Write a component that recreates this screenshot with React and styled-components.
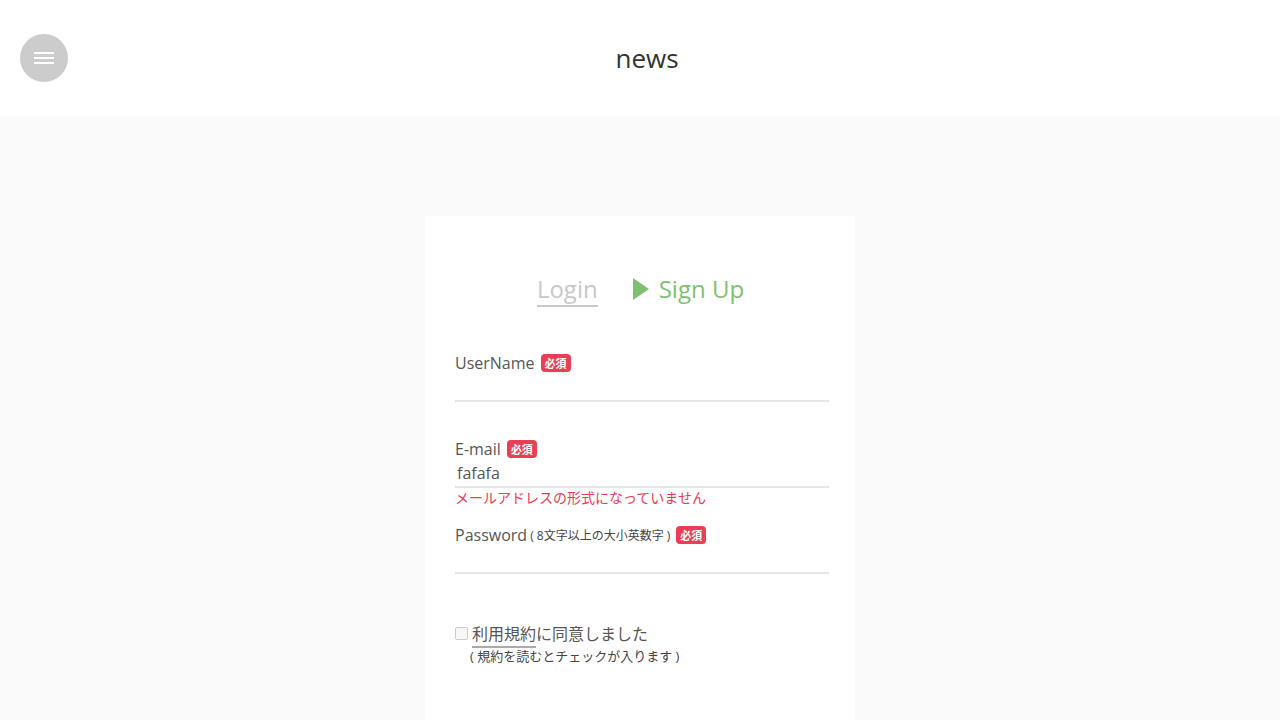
import styled, {createGlobalStyle} from 'styled-components';

const GlobalStyle = createGlobalStyle`
  html, body {
    margin: 0;
    padding: 0;
    background: #fafafa;
    font-family: 'Open Sans', 'Noto Sans CJK JP', sans-serif;
    color: #555;
  }
`;

const Field = ({label, note, value, error}) => (
  <FieldWrap>
    <LabelRow>
      {label}
      {note && <Note>( {note} )</Note>}
      <Badge>必須</Badge>
    </LabelRow>
    <Input>{value}</Input>
    <Error>{error}</Error>
  </FieldWrap>
);

const App = () => {
  return (
    <>
      <GlobalStyle />
      <Header>
        <MenuButton>
          <Bar />
          <Bar />
          <Bar />
        </MenuButton>
        <Title>news</Title>
      </Header>
      <Main>
        <Card>
          <Tabs>
            <Tab>Login</Tab>
            <Tab active>
              <Arrow />
              Sign Up
            </Tab>
          </Tabs>
          <Field label="UserName" />
          <Field label="E-mail" value="fafafa" error="メールアドレスの形式になっていません" />
          <Field label="Password" note="8文字以上の大小英数字" />
          <Terms>
            <Check />
            <TermsText>
              <TermsLink>利用規約</TermsLink>に同意しました
            </TermsText>
          </Terms>
          <TermsNote>( 規約を読むとチェックが入ります )</TermsNote>
        </Card>
      </Main>
    </>
  );
};

export default App;

const Header = styled.header`
  height: 116px;
  background: #fff;
  display: flex;
  align-items: center;
  padding-left: 20px;
  box-sizing: border-box;
`;

const MenuButton = styled.div`
  width: 48px;
  height: 48px;
  border-radius: 50%;
  background: #ccc;
  display: flex;
  flex-direction: column;
  align-items: center;
  justify-content: center;
  gap: 3px;
`;

const Bar = styled.span`
  width: 20px;
  height: 2px;
  background: #fff;
`;

const Title = styled.h1`
  flex: 1;
  margin: 0 68px 0 0;
  padding-left: 14px;
  text-align: center;
  font-size: 26px;
  font-weight: 400;
  color: #333;
`;

const Main = styled.main`
  height: 604px;
  overflow: hidden;
  padding-top: 100px;
  box-sizing: border-box;
`;

const Card = styled.div`
  width: 430px;
  height: 520px;
  margin: 0 auto;
  background: #fff;
  padding: 57px 26px 0 30px;
  box-sizing: border-box;
`;

const Tabs = styled.div`
  display: flex;
  justify-content: center;
  gap: 35px;
  height: 34px;
  margin-bottom: 44px;
  padding-right: 3px;
`;

const Tab = styled.div`
  display: flex;
  align-items: center;
  font-size: 24px;
  line-height: 32px;
  height: 32px;
  color: ${p => (p.active ? '#7fbf72' : '#c8c8c8')};
  border-bottom: ${p => (p.active ? 'none' : '2px solid #c8c8c8')};
`;

const Arrow = styled.span`
  width: 0;
  height: 0;
  border-top: 11px solid transparent;
  border-bottom: 11px solid transparent;
  border-left: 16px solid #7fbf72;
  margin-right: 10px;
`;

const FieldWrap = styled.div`
  margin-bottom: 16px;
`;

const LabelRow = styled.div`
  display: flex;
  align-items: center;
  height: 24px;
  font-size: 16px;
  color: #555;
`;

const Note = styled.span`
  font-size: 12px;
  margin-left: 3px;
  color: #444;
`;

const Badge = styled.span`
  display: inline-flex;
  align-items: center;
  justify-content: center;
  height: 18px;
  padding: 0 4px;
  margin-left: 6px;
  border-radius: 4px;
  background: #e93e55;
  color: #fff;
  font-size: 11px;
  font-weight: 700;
`;

const Input = styled.div`
  width: 372px;
  height: 25px;
  border-bottom: 2px solid #e6e6e6;
  padding-left: 2px;
  font-size: 16px;
  line-height: 25px;
  color: #555;
`;

const Error = styled.div`
  height: 19px;
  font-size: 14px;
  line-height: 19px;
  color: #ea3a55;
`;

const Terms = styled.div`
  display: flex;
  align-items: center;
  gap: 4px;
  margin-top: 28px;
  height: 24px;
`;

const Check = styled.span`
  width: 11px;
  height: 11px;
  border: 1px solid #ccc;
  border-radius: 2px;
  background: #f8f8f8;
`;

const TermsText = styled.span`
  font-size: 16px;
  color: #555;
`;

const TermsLink = styled.span`
  padding-bottom: 1px;
  border-bottom: 2px solid #aaa;
`;

const TermsNote = styled.div`
  font-size: 13px;
  color: #444;
  margin-left: 15px;
  line-height: 22px;
`;
